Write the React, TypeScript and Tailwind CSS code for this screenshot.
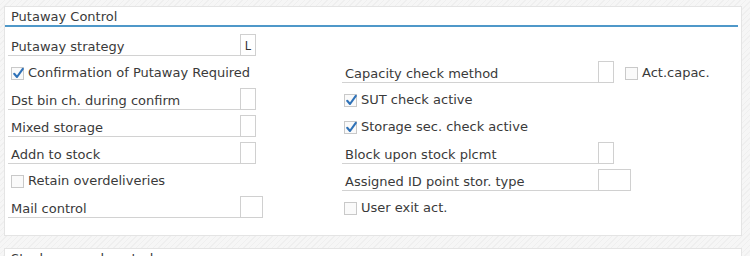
import React from "react";

const font = { fontFamily: '"DejaVu Sans", Verdana, sans-serif' };

function Check({ checked }: { checked?: boolean }) {
  return (
    <span className="relative inline-block w-[13px] h-[13px] border border-[#c9c9c9] bg-[#fafafa] shrink-0">
      {checked && (
        <svg className="absolute left-[0px] top-[-1px]" width="13" height="13" viewBox="0 0 13 13">
          <path d="M2.2 6.8 L5 10 L10.8 1.8" fill="none" stroke="#2f72b8" strokeWidth="2.1" strokeLinecap="round" strokeLinejoin="round" />
        </svg>
      )}
    </span>
  );
}

function Field({ label, w, boxW = 16, value }: { label: string; w: string; boxW?: number; value?: string }) {
  return (
    <div className="flex h-[22px]">
      <div className={`${w} h-full border-b border-[#d2d2d2] flex items-center pt-[4px] pl-[3px] text-[13px] text-[#3a3a3a] whitespace-nowrap`}>
        {label}
      </div>
      <div
        className={`${boxW === 16 ? "w-[16px]" : boxW === 23 ? "w-[23px]" : "w-[33px]"} h-full border border-[#d0d0d0] bg-white flex items-start pt-[3px] justify-center text-[12px] text-[#333]`}
        style={value ? { fontFamily: '"Liberation Mono", monospace' } : undefined}
      >
        {value}
      </div>
    </div>
  );
}

function CheckRow({ label, checked, pl }: { label: string; checked?: boolean; pl: string }) {
  return (
    <div className={`flex items-center h-[22px] pt-[2px] ${pl} gap-[4px] text-[13px] text-[#3a3a3a] whitespace-nowrap`}>
      <Check checked={checked} />
      <span>{label}</span>
    </div>
  );
}

export default function App() {
  return (
    <div
      className="w-[750px] h-[256px] overflow-hidden bg-[#f4f4f4] pt-[6px] pl-[4px]"
      style={{
        ...font,
        backgroundImage:
          "repeating-linear-gradient(135deg, #f6f6f6 0px, #f6f6f6 3px, #efefef 3px, #efefef 4px)",
      }}
    >
      <div className="w-[738px] h-[230px] border border-[#e4e4e4] bg-white">
        <div className="h-[20px] mr-[3px] border-b-2 border-[#4f98c9] pl-[6px] pt-[2px] text-[13px] leading-[16px] text-[#3a3a3a]">
          Putaway Control
        </div>
        <div className="mt-[7px] pl-[3px] flex flex-col gap-[5px]">
          <div className="flex">
            <div className="w-[334px]">
              <Field label="Putaway strategy" w="w-[232px]" value="L" />
            </div>
          </div>
          <div className="flex">
            <div className="w-[334px]">
              <CheckRow label="Confirmation of Putaway Required" checked pl="pl-[3px]" />
            </div>
            <div className="flex items-center">
              <Field label="Capacity check method" w="w-[256px]" />
              <div className="ml-[11px]">
                <CheckRow label="Act.capac." pl="pl-0" />
              </div>
            </div>
          </div>
          <div className="flex">
            <div className="w-[334px]">
              <Field label="Dst bin ch. during confirm" w="w-[232px]" />
            </div>
            <CheckRow label="SUT check active" checked pl="pl-[2px]" />
          </div>
          <div className="flex">
            <div className="w-[334px]">
              <Field label="Mixed storage" w="w-[232px]" />
            </div>
            <CheckRow label="Storage sec. check active" checked pl="pl-[2px]" />
          </div>
          <div className="flex">
            <div className="w-[334px]">
              <Field label="Addn to stock" w="w-[232px]" />
            </div>
            <Field label="Block upon stock plcmt" w="w-[256px]" />
          </div>
          <div className="flex">
            <div className="w-[334px]">
              <CheckRow label="Retain overdeliveries" pl="pl-[3px]" />
            </div>
            <Field label="Assigned ID point stor. type" w="w-[256px]" boxW={33} />
          </div>
          <div className="flex">
            <div className="w-[334px]">
              <Field label="Mail control" w="w-[232px]" boxW={23} />
            </div>
            <CheckRow label="User exit act." pl="pl-[2px]" />
          </div>
        </div>
      </div>
      <div className="mt-[12px] w-[738px] h-[40px] border border-[#e4e4e4] bg-white pl-[6px] pt-[2px] text-[13px] leading-[16px] text-[#3a3a3a]">
        Stock removal control
      </div>
    </div>
  );
}
